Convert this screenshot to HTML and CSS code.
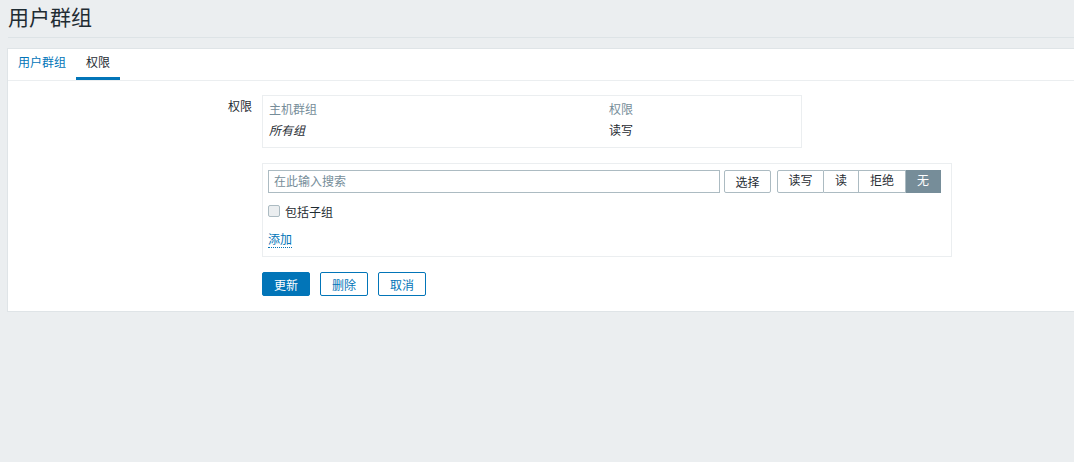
FILE: index.html
```html
<!DOCTYPE html>
<html lang="zh-CN">
<head>
<meta charset="UTF-8">
<title>用户群组</title>
<link rel="stylesheet" href="styles.css">
</head>
<body>
<div class="header">
  <h1>用户群组</h1>
</div>
<div class="box">
  <div class="tabs">
    <a class="tab">用户群组</a>
    <a class="tab active">权限</a>
  </div>
  <div class="form">
    <div class="form-row">
      <label class="form-label">权限</label>
      <div class="form-field">
        <div class="perm-table">
          <table>
            <tr>
              <th class="col-group">主机群组</th>
              <th>权限</th>
            </tr>
            <tr>
              <td class="col-group"><i>所有组</i></td>
              <td>读写</td>
            </tr>
          </table>
        </div>
      </div>
    </div>
    <div class="form-row">
      <div class="form-label"></div>
      <div class="form-field">
        <div class="add-box">
          <div class="search-line">
            <input type="text" class="search" placeholder="在此输入搜索">
            <button class="btn-grey">选择</button>
            <div class="segmented">
              <span>读写</span>
              <span class="narrow">读</span>
              <span>拒绝</span>
              <span class="narrow on">无</span>
            </div>
          </div>
          <label class="check-line">
            <input type="checkbox"> 包括子组
          </label>
          <div class="add-line"><a class="link">添加</a></div>
        </div>
      </div>
    </div>
    <div class="form-row">
      <div class="form-label"></div>
      <div class="form-field buttons">
        <button class="btn-main">更新</button>
        <button class="btn-alt">删除</button>
        <button class="btn-alt">取消</button>
      </div>
    </div>
  </div>
</div>
</body>
</html>
```

FILE: styles.css
```css
body {
  margin: 0;
  background-color: #ebeef0;
  color: #1f2c33;
  font-family: "Liberation Sans", Arial, "Noto Sans CJK SC", sans-serif;
  font-size: 12px;
}
.header {
  margin-left: 8px;
  height: 37px;
  border-bottom: 1px solid #dde3e6;
  display: flex;
  align-items: center;
}
.header h1 {
  margin: 0;
  font-size: 21px;
  font-weight: normal;
  line-height: 1;
  margin-top: -2px;
}
.box {
  margin: 10px 0 0 7px;
  background-color: #fff;
  border: 1px solid #dfe4e7;
  border-right: none;
  height: 264px;
  box-sizing: border-box;
}
.tabs {
  display: flex;
  height: 31px;
  border-bottom: 1px solid #ebeef0;
}
.tab {
  padding: 0 10px;
  line-height: 28px;
  color: #0275b8;
  border-bottom: 3px solid transparent;
}
.tab.active {
  color: #1f2c33;
  border-bottom-color: #0275b8;
}
.form {
  padding-top: 14px;
}
.form-row {
  display: flex;
  margin-bottom: 15px;
}
.form-label {
  width: 244px;
  text-align: right;
  padding-right: 10px;
  padding-top: 2px;
}
.perm-table {
  width: 540px;
  height: 53px;
  box-sizing: border-box;
  border: 1px solid #ebeef0;
  padding: 2px 6px 0;
}
.perm-table table {
  border-collapse: collapse;
  width: 100%;
}
.perm-table th,
.perm-table td {
  height: 21px;
  padding: 0;
  text-align: left;
  font-weight: normal;
}
.perm-table th {
  color: #768d99;
}
.col-group {
  width: 340px;
}
.add-box {
  width: 690px;
  height: 94px;
  box-sizing: border-box;
  border: 1px solid #ebeef0;
  padding: 6px 5px;
}
.search-line {
  display: flex;
  align-items: center;
}
.search {
  width: 452px;
  height: 23px;
  box-sizing: border-box;
  border: 1px solid #acbbc2;
  padding: 0 5px;
  font: inherit;
  margin: 0 4px 0 0;
}
.search::placeholder {
  color: #768d99;
}
button {
  font: inherit;
  height: 23px;
  cursor: pointer;
  border-radius: 2px;
  box-sizing: border-box;
}
.btn-grey {
  width: 47px;
  background-color: #fff;
  border: 1px solid #acbbc2;
  color: #1f2c33;
  padding: 0;
  margin-right: 6px;
}
.segmented {
  display: flex;
  height: 23px;
}
.segmented span {
  width: 47px;
  box-sizing: border-box;
  border: 1px solid #acbbc2;
  border-left: none;
  text-align: center;
  line-height: 21px;
}
.segmented span:first-child {
  border-left: 1px solid #acbbc2;
  border-radius: 2px 0 0 2px;
}
.segmented span.narrow {
  width: 35px;
}
.segmented span.on {
  background-color: #768d99;
  border-color: #768d99;
  color: #fff;
}
.check-line {
  display: flex;
  align-items: center;
  margin-top: 11px;
  height: 14px;
}
.check-line input {
  appearance: none;
  width: 12px;
  height: 12px;
  margin: 0 5px 0 0;
  border: 1px solid #acbbc2;
  border-radius: 2px;
  background-color: #ebeef0;
}
.add-line {
  margin-top: 12px;
}
.link {
  color: #0275b8;
  border-bottom: 1px dotted #0275b8;
  cursor: pointer;
}
.buttons {
  display: flex;
  gap: 10px;
}
.buttons button {
  width: 48px;
  height: 24px;
}
.btn-main {
  background-color: #0275b8;
  border: 1px solid #0275b8;
  color: #fff;
}
.btn-alt {
  background-color: #fff;
  border: 1px solid #0275b8;
  color: #0275b8;
}
```
